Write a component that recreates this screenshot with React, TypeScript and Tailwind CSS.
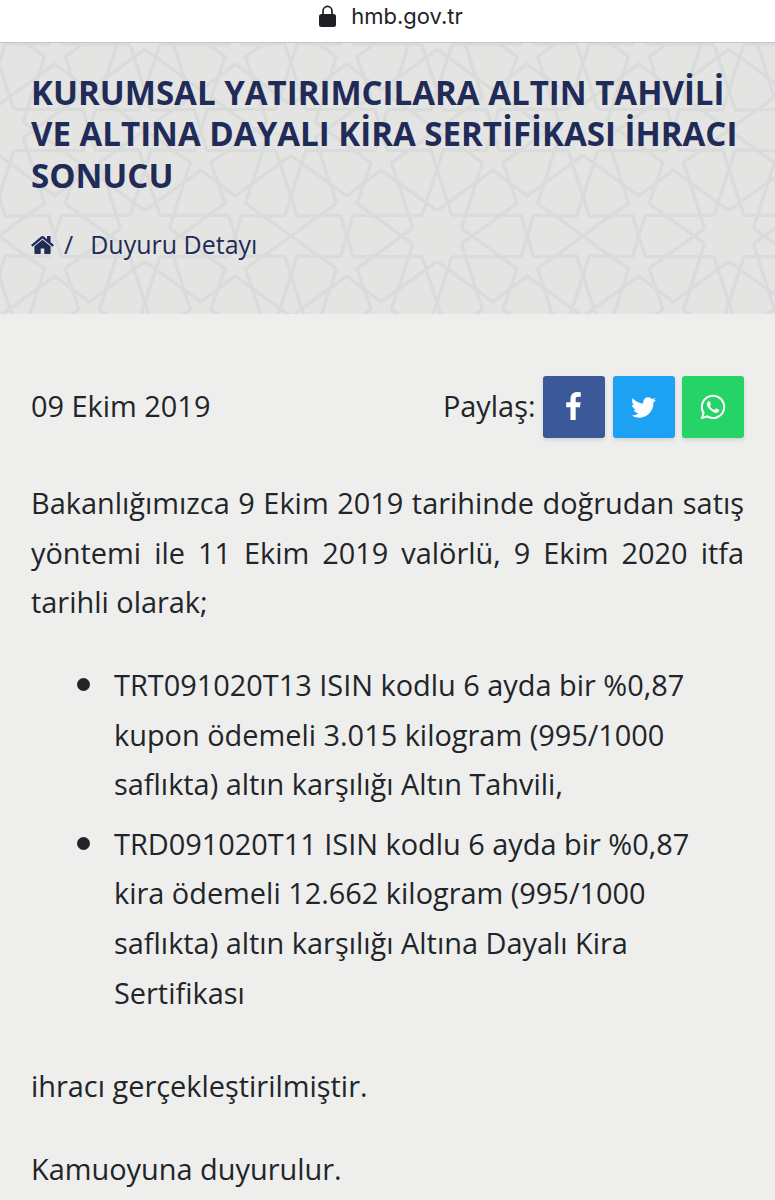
import React from 'react';
import { FaWhatsapp } from 'react-icons/fa';

// Distances of the ten-fold girih lattice used behind the page title
const STEP_X = 146;
const STEP_Y = 106;
const ORIGIN = { x: 145, y: 193 };

const rotations = [0, 36, 72, 108, 144, 180, 216, 252, 288, 324];

const centers: { x: number; y: number }[] = [];
for (let row = -3; row <= 2; row++) {
  for (let col = -2; col <= 5; col++) {
    if ((row + col) % 2 === 0) {
      centers.push({ x: ORIGIN.x + col * STEP_X, y: ORIGIN.y + row * STEP_Y });
    }
  }
}

const GirihPattern: React.FC = () => (
  <svg
    className="absolute inset-0 h-full w-full"
    fill="none"
    stroke="#dadbdb"
    strokeWidth="3.4"
    strokeLinejoin="round"
    aria-hidden="true"
  >
    <defs>
      <g id="girih-cell">
        {rotations.map((angle) => (
          <path key={angle} d="M15 20.6H83.9L90.2 0L83.9 -20.6H15" transform={`rotate(${angle})`} />
        ))}
        {/* bowtie that fills the gap on the right of each decagon */}
        <path d="M118 20.4H96.5L90.2 0L96.5 -20.4H118L174 20.4H195.5L201.8 0L195.5 -20.4H174L118 20.4" />
      </g>
    </defs>
    {centers.map((c) => (
      <use key={`${c.x}-${c.y}`} href="#girih-cell" x={c.x} y={c.y} />
    ))}
  </svg>
);

const AddressBar: React.FC = () => (
  <div className="flex h-[43px] items-start justify-center gap-[15px] border-b border-[#c4c4c4] bg-white pl-[7px] pt-[5px]">
    <svg className="h-[22px] w-[17px]" viewBox="0 0 17 22" aria-hidden="true">
      <path d="M4 10V6.2a4.5 4.9 0 0 1 9 0V10" fill="none" stroke="#1f2023" strokeWidth="1.7" />
      <rect y="9" width="17" height="13" rx="2.5" fill="#1f2023" />
    </svg>
    <span className="font-['Inter',sans-serif] text-[22px] leading-[22px] text-[#222326]">hmb.gov.tr</span>
  </div>
);

const PageHeader: React.FC = () => (
  <header className="relative h-[271px] overflow-hidden bg-[#e4e4e2]">
    <GirihPattern />
    <div className="relative px-[31px] pt-[29px] text-[#212b57]">
      <h1 className="whitespace-nowrap text-[33.05px] font-bold leading-[41.3px]">
        KURUMSAL YATIRIMCILARA ALTIN TAHVİLİ
        <br />
        VE ALTINA DAYALI KİRA SERTİFİKASI İHRACI
        <br />
        SONUCU
      </h1>
      <nav className="mt-[30px] flex items-center text-[25px] leading-[36px]">
        <svg className="mt-[3px] h-[18px] w-[23px]" viewBox="89 253 1614 1283" fill="currentColor" aria-hidden="true">
          <path d="M1472 992v480q0 26-19 45t-45 19h-384v-384h-256v384h-384q-26 0-45-19t-19-45v-480q0-1 .5-3t.5-3l575-474 575 474q1 2 1 6zm223-69l-62 74q-8 9-21 11h-3q-13 0-21-7l-692-577-692 577q-12 8-24 7-13-2-21-11l-62-74q-8-10-7-23.5t11-21.5l719-599q32-26 76-26t76 26l244 204v-195q0-14 9-23t23-9h192q14 0 23 9t9 23v408l219 182q10 8 11 21.5t-7 23.5z" />
        </svg>
        <span className="ml-[10px]">/</span>
        <span className="ml-[17px]">Duyuru Detayı</span>
      </nav>
    </div>
  </header>
);

const shareButton = 'flex size-[62px] items-center justify-center rounded-[3px] text-white shadow-[0_2px_4px_rgba(0,0,0,0.12)]';

const ShareRow: React.FC = () => (
  <div className="flex items-center justify-between">
    <span className="-mt-[2px]">09 Ekim 2019</span>
    <div className="flex items-center gap-[7.5px]">
      <span className="-mt-[2px]">Paylaş:</span>
      <a className={`${shareButton} bg-[#3b5998]`} title="Facebook">
        <svg className="mb-[2px] mr-px h-[28px] w-[15px]" viewBox="479 0 864 1664" fill="currentColor">
          <path d="M1343 12v264h-157q-86 0-116 36t-30 108v189h293l-39 296h-254v759h-306v-759h-255v-296h255v-218q0-186 104-288.5t277-102.5q147 0 228 12z" />
        </svg>
      </a>
      <a className={`${shareButton} bg-[#1da1f2]`} title="Twitter">
        <svg className="mr-px h-[21px] w-[25px]" viewBox="108 256 1576 1280" fill="currentColor">
          <path d="M1684 408q-67 98-162 167 1 14 1 42 0 130-38 259.5t-115.5 248.5-184.5 210.5-258 146-323 54.5q-271 0-496-145 35 4 78 4 225 0 401-138-105-2-188-64.5t-114-159.5q33 5 61 5 43 0 85-11-112-23-185.5-111.5t-73.5-205.5v-4q68 38 146 41-66-44-105-115t-39-154q0-88 44-163 121 149 294.5 238.5t371.5 99.5q-8-38-8-74 0-134 94.5-228.5t228.5-94.5q140 0 236 102 109-21 205-78-37 115-142 178 93-10 186-50z" />
        </svg>
      </a>
      <a className={`${shareButton} bg-[#25d366]`} title="WhatsApp">
        <FaWhatsapp size={28} />
      </a>
    </div>
  </div>
);

const items = [
  ['TRT091020T13 ISIN kodlu 6 ayda bir %0,87', 'kupon ödemeli 3.015 kilogram (995/1000', 'saflıkta) altın karşılığı Altın Tahvili,'],
  ['TRD091020T11 ISIN kodlu 6 ayda bir %0,87', 'kira ödemeli 12.662 kilogram (995/1000', 'saflıkta) altın karşılığı Altına Dayalı Kira', 'Sertifikası'],
];

const App: React.FC = () => {
  return (
    <div className="h-[1200px] w-[775px] overflow-hidden bg-[#eeeeec] font-['Open_Sans',sans-serif]">
      <AddressBar />
      <PageHeader />
      <main className="px-[31px] pt-[62px] text-[28.9px] leading-[49.6px] text-[#212529]">
        <ShareRow />
        <div className="mt-[40.2px]">
          <p className="[text-align-last:justify]">Bakanlığımızca 9 Ekim 2019 tarihinde doğrudan satış</p>
          <p className="[text-align-last:justify]">yöntemi ile 11 Ekim 2019 valörlü, 9 Ekim 2020 itfa</p>
          <p>tarihli olarak;</p>
        </div>
        <ul className="mt-[33px] space-y-[10px]">
          {items.map((lines) => (
            <li key={lines[0]} className="flex pl-[46px]">
              <span className="mr-[24px] mt-[18px] size-[13px] shrink-0 rounded-full bg-[#212529]" />
              <div className="whitespace-nowrap">
                {lines.map((line) => (
                  <div key={line}>{line}</div>
                ))}
              </div>
            </li>
          ))}
        </ul>
        <p className="mt-[43.8px]">ihracı gerçekleştirilmiştir.</p>
        <p className="mt-[33px]">Kamuoyuna duyurulur.</p>
      </main>
    </div>
  );
};

export default App;
